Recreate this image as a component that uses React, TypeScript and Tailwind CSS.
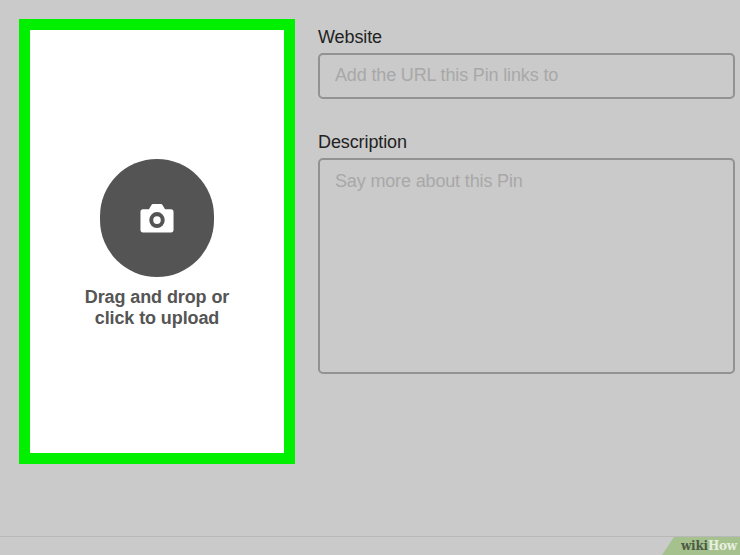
import React from 'react';

const FONT = "font-['Liberation_Sans',Arial,sans-serif]";

const CameraIcon = () => (
  <svg width="34" height="30" viewBox="0 0 36 31" preserveAspectRatio="none" className="block">
    <path
      fillRule="evenodd"
      fill="#fff"
      d="M3 6.5h6.5L12 2.2C12.4 1.4 13 1 13.9 1h8.2c.9 0 1.5.4 1.9 1.2l2.5 4.3H33c1.4 0 2.5 1.1 2.5 2.5v19c0 1.4-1.1 2.5-2.5 2.5H3c-1.4 0-2.5-1.1-2.5-2.5V9C.5 7.6 1.6 6.5 3 6.5ZM18 9.4a8.2 8.2 0 1 0 0 16.4 8.2 8.2 0 0 0 0-16.4Zm0 4.2a4 4 0 1 1 0 8 4 4 0 0 1 0-8Z"
    />
  </svg>
);

const Label = ({ children }: { children: React.ReactNode }) => (
  <div className="text-[18px] leading-[22px] text-[#222] mb-[5px] tracking-[-0.1px]">{children}</div>
);

const App: React.FC = () => {
  return (
    <div className={`w-[740px] h-[555px] bg-[#cacaca] flex flex-col overflow-hidden ${FONT}`}>
      <div className="h-[536px] shrink-0 flex items-start pt-[19px] pl-[19px]">
        {/* upload box */}
        <div className="w-[276px] h-[445px] bg-white border-[11px] border-[#00f000] flex flex-col items-center pt-[129px]">
          <div className="w-[114px] h-[118px] rounded-full bg-[#545454] flex items-center justify-center">
            <CameraIcon />
          </div>
          <div className="mt-[10px] text-center text-[18px] leading-[21px] font-bold text-[#555] tracking-[-0.1px]">
            Drag and drop or
            <br />
            click to upload
          </div>
        </div>

        {/* form */}
        <div className="w-[417px] ml-[23px] flex flex-col pt-[7px]">
          <Label>Website</Label>
          <div className="h-[46px] border-2 border-[#929292] rounded-[5px] pl-[15px] pt-[9px] text-[18px] leading-[22px] text-[#a8a8a8] tracking-[-0.15px]">
            Add the URL this Pin links to
          </div>
          <div className="mt-[32px]">
            <Label>Description</Label>
          </div>
          <div className="h-[216px] border-2 border-[#929292] rounded-[5px] pl-[15px] pt-[10px] text-[18px] leading-[22px] text-[#a8a8a8] tracking-[-0.15px]">
            Say more about this Pin
          </div>
        </div>
      </div>

      {/* footer */}
      <div className="h-[19px] shrink-0 border-t border-[#b8b8b8] flex justify-end">
        <div className="w-[78px] h-full bg-[#a5c28e] [clip-path:polygon(12px_0,100%_0,100%_100%,0_100%)] flex items-center justify-end pr-[3px] font-['DejaVu_Serif',serif] font-bold text-[12px] leading-none tracking-[-0.2px]">
          <span className="text-[#4f5a45]">wiki</span>
          <span className="text-[#e8f0e0]">How</span>
        </div>
      </div>
    </div>
  );
};

export default App;
